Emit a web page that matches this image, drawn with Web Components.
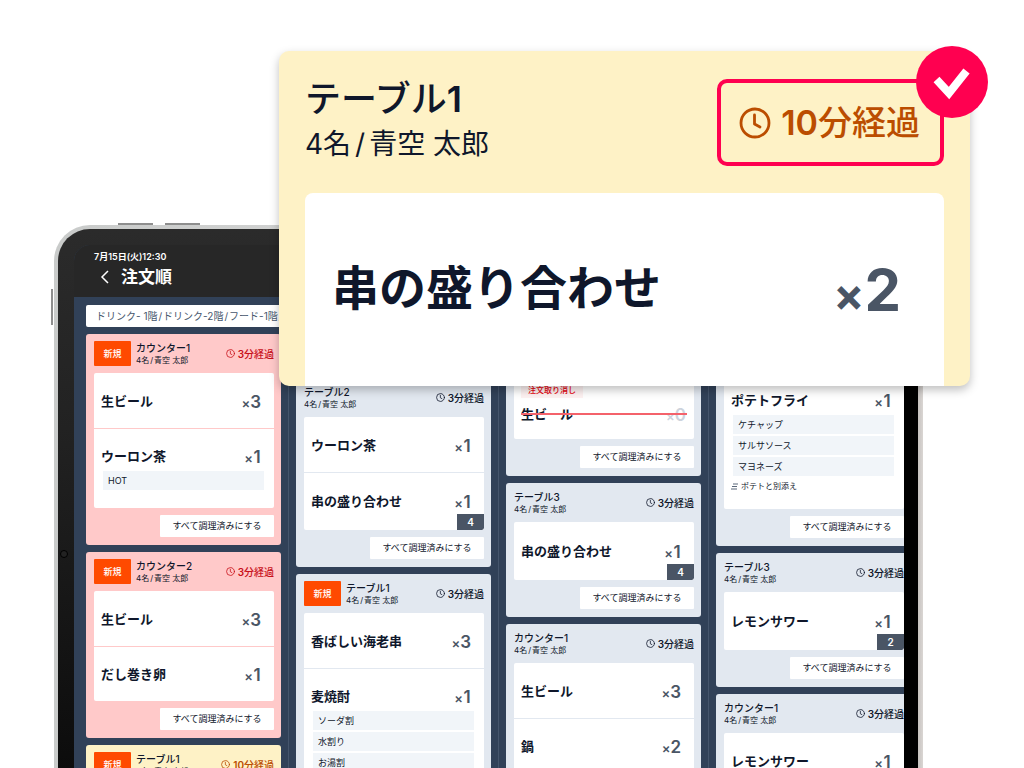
<!DOCTYPE html>
<html lang="ja">
<head>
<meta charset="utf-8">
<meta name="viewport" content="width=device-width, initial-scale=1">
<title>注文順</title>
<style>
  body { margin: 0; background: #fff; color: #0f172b; font-family: Inter, "Noto Sans CJK JP", sans-serif; }
</style>
</head>
<body>
<kds-scene>
  <kds-tablet>
    <kds-board>
      <kds-column>
        <kds-card name="カウンター1" guest="4名/青空 太郎" time="3分経過" fresh tone="late">
          <kds-item name="生ビール" qty="3"></kds-item>
          <kds-item name="ウーロン茶" qty="1" options="HOT"></kds-item>
        </kds-card>
        <kds-card name="カウンター2" guest="4名/青空 太郎" time="3分経過" fresh tone="late">
          <kds-item name="生ビール" qty="3"></kds-item>
          <kds-item name="だし巻き卵" qty="1"></kds-item>
        </kds-card>
        <kds-card name="テーブル1" guest="4名/青空 太郎" time="10分経過" fresh tone="warn">
        </kds-card>
      </kds-column>
      <kds-column style="--lead:44px">
        <kds-card name="テーブル2" guest="4名/青空 太郎" time="3分経過">
          <kds-item name="ウーロン茶" qty="1"></kds-item>
          <kds-item name="串の盛り合わせ" qty="1" total="4"></kds-item>
        </kds-card>
        <kds-card name="テーブル1" guest="4名/青空 太郎" time="3分経過" fresh>
          <kds-item name="香ばしい海老串" qty="3"></kds-item>
          <kds-item name="麦焼酎" qty="1" options="ソーダ割,水割り,お湯割"></kds-item>
        </kds-card>
      </kds-column>
      <kds-column style="--lead:40px">
        <kds-card continued>
          <kds-item name="生ビール" qty="0" cancelled></kds-item>
        </kds-card>
        <kds-card name="テーブル3" guest="4名/青空 太郎" time="3分経過">
          <kds-item name="串の盛り合わせ" qty="1" total="4"></kds-item>
        </kds-card>
        <kds-card name="カウンター1" guest="4名/青空 太郎" time="3分経過">
          <kds-item name="生ビール" qty="3"></kds-item>
          <kds-item name="鍋" qty="2"></kds-item>
        </kds-card>
      </kds-column>
      <kds-column style="--lead:38px">
        <kds-card continued>
          <kds-item name="ポテトフライ" qty="1" options="ケチャップ,サルサソース,マヨネーズ" note="ポテトと別添え"></kds-item>
        </kds-card>
        <kds-card name="テーブル3" guest="4名/青空 太郎" time="3分経過">
          <kds-item name="レモンサワー" qty="1" total="2"></kds-item>
        </kds-card>
        <kds-card name="カウンター1" guest="4名/青空 太郎" time="3分経過">
          <kds-item name="レモンサワー" qty="1"></kds-item>
        </kds-card>
      </kds-column>
    </kds-board>
  </kds-tablet>
  <kds-callout slot="over" name="テーブル1" guest="4名/青空 太郎" time="10分経過" item="串の盛り合わせ" qty="2"></kds-callout>
</kds-scene>

<script>
const clock = `<svg viewBox="0 0 32 32" fill="none" stroke="currentColor" stroke-width="2.8" stroke-linecap="round" stroke-linejoin="round" aria-hidden="true"><circle cx="16" cy="16" r="14"/><path d="M15.500 8V17l5.500 3"/></svg>`;

// Digits are set one step heavier than the Japanese text around them.
const digits = text => text.replace(/\d+/g, "<b>$&</b>");
const slashes = text => text.replace(/\//g, "<i>/</i>");

function define(tag, render) {
  customElements.define(tag, class extends HTMLElement {
    constructor() {
      super();
      this.attachShadow({ mode: "open" });
    }
    connectedCallback() {
      const t = document.createElement("template");
      t.innerHTML = render(name => this.getAttribute(name));
      this.shadowRoot.replaceChildren(t.content.cloneNode(true));
    }
  });
}

define("kds-scene", () => `
<style>
  :host { display: block; position: relative; box-sizing: border-box; height: 100vh; overflow: hidden; padding: 225px 101px 0 54px; }
</style>
<slot></slot><slot name="over"></slot>`);

define("kds-tablet", () => `
<style>
  :host { display: block; position: relative; box-sizing: border-box; min-height: 100vh; padding: 4px 5px 0 4px; border-radius: 36px 36px 0 0;
    background: linear-gradient(90deg, #c9cbca 0, #d6d6d6 50%, #b8b4b2 99%, #dad6d3 100%); }
  .bezel { min-height: 100vh; padding: 16px 14px 0 16px; border-radius: 32px 32px 0 0;
    background: linear-gradient(90deg, transparent 60%, #000 97%), linear-gradient(#2b2b2b 0, #222 200px, #0c0c0c 540px); }
  .screen { overflow: hidden; border-radius: 16px 16px 0 0; background: #314158; }
  header { display: flex; flex-direction: column; height: 52px; padding-left: 20px; background: #272727; color: #fff; }
  .date { font-size: 9px; line-height: 16px; font-weight: 600; padding-top: 4px; }
  .bar { display: flex; align-items: center; gap: 11px; padding-left: 6px; }
  h1 { margin: 0; font-size: 17px; line-height: 24px; font-weight: 700; }
  .back { padding: 0; border: 0; background: none; color: #fff; display: flex; }
  .back svg { width: 10px; height: 14px; }
  .key { position: absolute; background: #8e8e8e; }
  .k1, .k2 { top: -2px; height: 2px; width: 35px; }
  .k1 { left: 64px; } .k2 { left: 111px; }
  .k3 { left: -3px; top: 64px; width: 2px; height: 36px; }
  .cam { position: absolute; left: 6px; top: 325px; width: 6px; height: 6px; border-radius: 50%; background: #222; border: 1px solid #000; }
</style>
<i class="key k1"></i><i class="key k2"></i><i class="key k3"></i>
<div class="bezel">
  <div class="screen">
    <header>
      <div class="date">7月15日(火)12:30</div>
      <div class="bar">
        <button class="back" aria-label="戻る"><svg viewBox="0 0 10 14" fill="none" stroke="currentColor" stroke-width="1.500"><path d="M8 1 2 7l6 6"/></svg></button>
        <h1>注文順</h1>
      </div>
    </header>
    <slot></slot>
  </div>
</div>
<i class="cam"></i>`);

define("kds-board", () => `
<style>
  :host { display: block; padding: 8px 0 0 12px; background: #314158; }
  .filter { display: block; width: 100%; height: 22px; padding: 0 0 0 10px; border: 0; border-radius: 2px; background: #fff; color: #45556c;
    font: 400 10px/22px Inter, "Noto Sans CJK JP", sans-serif; text-align: left; }
  i { font-style: normal; margin: 0 1px; }
  .columns { display: flex; gap: 7px; }
</style>
<button class="filter">${slashes("ドリンク- 1階/ドリンク-2階/フード-1階/")}</button>
<div class="columns"><slot></slot></div>`);

define("kds-column", () => `
<style>
  :host { display: flex; flex-direction: column; gap: 7px; flex: 0 0 195px; padding: calc(7px + var(--lead, 0px)) 7px 0 0; border-right: 1px solid #45556c; min-height: 100vh; }
</style>
<slot></slot>`);

define("kds-card", a => `
<style>
  :host { display: block; padding: 0 7px 8px 8px; border-radius: 3px; background: #e2e8f0; --line: #e2e8f0; --time: #0f172b; }
  :host([tone=late]) { background: #ffc9c9; --line: #ffc9c9; --time: #c8101a; }
  :host([tone=warn]) { background: #fef2c6; --line: #fef2c6; --time: #bb4d00; }
  header { display: flex; align-items: center; height: 39px; }
  .new { width: 37px; margin-right: 5px; border-radius: 1px; background: #ff4a00; color: #fff; font-size: 9px; line-height: 25px; font-weight: 500; text-align: center; }
  .who { flex: 1; }
  h2 { margin: 0; font-size: 10px; line-height: 13px; font-weight: 500; }
  b { font-weight: 600; }
  p { margin: 0; font-size: 8px; line-height: 11px; }
  i { font-style: normal; margin: 0 1px; }
  .time { display: flex; align-items: center; gap: 3px; font-size: 10px; line-height: 14px; font-weight: 500; color: var(--time); }
  .time svg { width: 9px; height: 9px; }
  .items { border-radius: 2px; overflow: hidden; background: #fff; }
  footer { display: flex; justify-content: flex-end; padding-top: 7px; }
  footer button { width: 114px; height: 22px; padding: 0; border: 0; border-radius: 1px; background: #fff; color: #0f172b; font: 400 9px/22px Inter, "Noto Sans CJK JP", sans-serif; }
</style>
${a("continued") !== null ? "" : `<header>
  ${a("fresh") !== null ? `<span class="new">新規</span>` : ""}
  <div class="who"><h2>${a("name")}</h2><p>${slashes(a("guest"))}</p></div>
  <div class="time">${clock}<span>${digits(a("time"))}</span></div>
</header>`}
<div class="items"><slot></slot></div>
<footer><button>すべて調理済みにする</button></footer>`);

define("kds-item", a => `
<style>
  :host { display: block; position: relative; box-sizing: border-box; min-height: 55px; padding: 16px 10px 15px 7px; }
  :host(:not(:first-child)) { box-shadow: inset 0 1px var(--line); }
  :host([total]) { padding-top: 17px; padding-bottom: 17px; }
  :host([cancelled]) { padding-top: 8px; padding-bottom: 13px; }
  .row { position: relative; display: flex; justify-content: space-between; align-items: center; height: 24px; }
  h3 { margin: 0; font-size: 13px; line-height: 24px; font-weight: 700; }
  .qty { display: flex; align-items: baseline; margin-right: 3px; padding-top: 2px; color: #4a5565; font-size: 17px; line-height: 24px; font-weight: 600; }
  .qty small { font-size: 13px; line-height: 24px; }
  .qty b { min-width: 8px; font-weight: 600; text-align: center; }
  ul { display: grid; gap: 2px; margin: 3px 0 3px 2px; padding: 0; list-style: none; }
  li { padding-left: 5px; background: #f1f5f9; font-size: 9px; line-height: 19px; }
  .note { display: flex; align-items: center; gap: 3px; font-size: 8px; line-height: 15px; }
  .note svg { width: 7px; height: 7px; }
  .total { position: absolute; right: 0; bottom: 0; width: 27px; border-radius: 0 0 2px 0; background: #4a5565; color: #fff; font-size: 10px; line-height: 16px; font-weight: 600; text-align: center; }
  .tag { width: 62px; margin-bottom: 4px; background: #fef2f2; color: #e7000b; font-size: 8px; line-height: 16px; font-weight: 500; text-align: center; }
  :host([cancelled]) .qty { color: #cdd3dc; margin-right: -2px; }
  :host([cancelled]) .row::after { content: ""; position: absolute; z-index: 1; left: 0; right: -3px; top: 11px; height: 2px; background: #f4626b; }
</style>
${a("cancelled") !== null ? `<div class="tag">注文取り消し</div>` : ""}
<div class="row"><h3>${a("name")}</h3><span class="qty"><small>×</small><b>${a("qty")}</b></span></div>
${a("options") ? `<ul>${a("options").split(",").map(o => `<li>${o}</li>`).join("")}</ul>` : ""}
${a("note") ? `<div class="note"><svg viewBox="0 0 7 7" stroke="#314158" stroke-width="0.800" aria-hidden="true"><path d="M2 1h5M1 3.500h5M0 6h6"/></svg>${a("note")}</div>` : ""}
${a("total") ? `<span class="total">${a("total")}</span>` : ""}`);

define("kds-callout", a => `
<style>
  :host { position: absolute; z-index: 2; left: 279px; right: 54px; top: 51px; box-sizing: border-box; padding: 28px 26px 0; border-radius: 10px; background: #fef2c6; box-shadow: 0 4px 10px rgba(0, 0, 0, .25); }
  header { display: flex; justify-content: space-between; height: 114px; }
  h2 { margin: 0; font-size: 36px; line-height: 40px; font-weight: 500; }
  b { font-weight: 600; }
  p { margin: 3px 0 0; font-size: 28px; line-height: 44px; }
  i { font-style: normal; margin: 0 4px; }
  .time { position: relative; box-sizing: border-box; display: flex; align-items: center; gap: 10px; height: 87px; padding: 0 20px 0 18px; border: 4px solid #ff0050; border-radius: 10px; color: #bb4d00; font-size: 34px; font-weight: 500; }
  .time span { padding-bottom: 4px; }
  .clock { display: flex; width: 32px; height: 32px; }
  .mark { position: absolute; right: -48px; top: -37px; width: 72px; height: 72px; }
  .item { display: flex; justify-content: space-between; align-items: center; height: 193px; padding: 0 43px 0 27px; border-radius: 8px 8px 0 0; background: #fff; }
  h3 { margin: 0; padding-bottom: 10px; font-size: 47px; font-weight: 700; }
  .qty { color: #4a5565; font-size: 58px; font-weight: 700; }
  .qty small { font-size: 46px; }
  .qty b { font-weight: 700; }
</style>
<header>
  <div><h2>${digits(a("name"))}</h2><p>${slashes(a("guest"))}</p></div>
  <div class="time"><div class="clock">${clock}</div><span>${digits(a("time"))}</span>
    <svg class="mark" viewBox="0 0 72 72" aria-hidden="true"><circle cx="36" cy="36" r="36" fill="#ff0050"/><path d="M20.500 33.500 33 47 50.500 25" fill="none" stroke="#fff" stroke-width="8"/></svg>
  </div>
</header>
<div class="item"><h3>${a("item")}</h3><span class="qty"><small>×</small><b>${a("qty")}</b></span></div>`);
</script>
</body>
</html>
